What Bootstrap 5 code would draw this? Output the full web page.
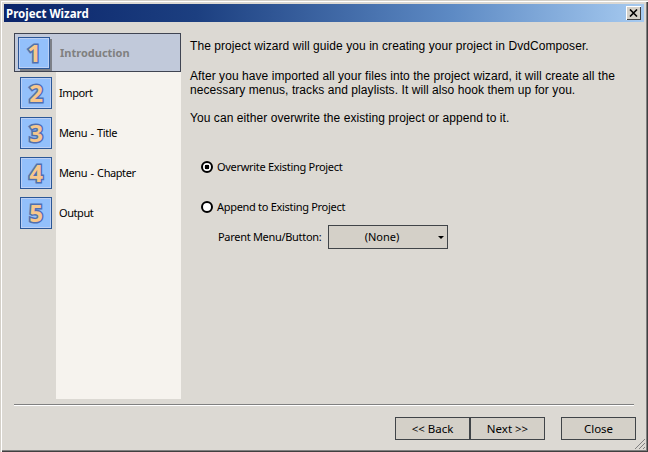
<!DOCTYPE html>
<html lang="en">
<head>
<meta charset="utf-8">
<title>Project Wizard</title>
<link href="https://cdn.jsdelivr.net/npm/bootstrap@5.3.0/dist/css/bootstrap.min.css" rel="stylesheet">
<style>
html,body{margin:0;height:452px;overflow:hidden}
body{font-family:"Noto Sans","DejaVu Sans",sans-serif;font-size:11px;line-height:14px;color:#000;background:#dcd9d3}
.wiz-win{width:648px;height:452px;padding:4px;background:#dcd9d3;box-shadow:inset 1px 1px 0 #d4d0c8,inset 2px 2px 0 #fff,inset -1px -1px 0 #404040,inset -2px -2px 0 #808080}
.wiz-title{height:18px;padding:1px 3px 0 2px;background:linear-gradient(90deg,#0a246a 0%,#1c3f80 30%,#5d8ac4 70%,#a6caf0 100%)}
.wiz-title-text{color:#fff;font-weight:700;font-size:11.5px}
.wiz-x{width:15px;height:14px;margin-top:-1px;background:#d4d0c8;box-shadow:inset 1px 1px 0 #fff,inset -1px -1px 0 #404040}
.wiz-body{height:377px;padding:11px 8px 0 10px}
.wiz-rail{width:167px;height:366px;background:linear-gradient(90deg,transparent 42px,#f6f3ee 42px)}
.wiz-step{height:40px;padding-left:6px;gap:7px;letter-spacing:-.42px;word-spacing:1px}
.wiz-step-on{height:39px;margin-bottom:1px;padding-left:3px;gap:10px;background:#c1c9da;border:1px solid #3f4452;color:#808080;font-weight:700;letter-spacing:0;word-spacing:0}
.wiz-num{width:32px;height:32px;background:#93c0fb;border:1px solid #2b5797;box-shadow:inset 0 0 0 1px #bcd0f5;font-family:"Noto Sans",sans-serif;font-weight:700;font-size:24px;line-height:30px;letter-spacing:0;text-align:center;color:#f7c78c;-webkit-text-stroke:3px #4f6fb0;paint-order:stroke fill}
.wiz-step-on .wiz-num{box-shadow:inset 0 0 0 1px #bcd0f5,2px 2px 0 #7d8087}
.wiz-main{padding:6px 0 0 9px;flex:1}
.wiz-main p{margin:0;font-family:"Liberation Sans",Arial,sans-serif;font-size:12px;letter-spacing:.07px}
.wiz-main p+p{margin-top:14px}
.wiz-main p:first-child+p{margin-top:16px}
.wiz-opts{padding-top:35px;padding-left:11px;letter-spacing:-.3px}
.wiz-radio{height:14px;margin-bottom:26px;gap:4px}
.wiz-radio input{appearance:none;width:12px;height:12px;margin:0;border:2px solid #000;border-radius:50%;background:#fff;flex:none}
.wiz-radio input:checked{background:radial-gradient(circle,#000 0 2.2px,#fff 2.6px)}
.wiz-parent{margin-top:-15px;padding-left:17px;height:24px}
.wiz-parent>span{width:110px}
.wiz-pick{width:120px;height:24px;padding:0 3px 0 0;background:#d4d0c8;border:1px solid #404448;border-radius:0;font-size:11px;line-height:14px;color:#000}
.wiz-pick span{flex:1;text-align:center;margin-right:3px}
.wiz-caret{width:0;height:0;flex:none;border-left:3px solid transparent;border-right:3px solid transparent;border-top:3px solid #000}
.wiz-rule{margin:5px 10px 0;height:2px;width:620px;background:#808080;border-bottom:1px solid #fff}
.wiz-foot{padding:11px 8px 0 0;justify-content:flex-end}
.wiz-b{width:75px;height:23px;padding:0;background:#d4d0c8;border:1px solid #404448;border-radius:0;font-size:11.5px;line-height:14px;color:#000}
.wiz-b:hover{background:#d4d0c8;border-color:#404448;color:#000}
.wiz-gap{margin-left:16px}
.wiz-grip{position:absolute;right:3px;bottom:3px}
</style>
</head>
<body>
<div class="wiz-win position-relative d-flex flex-column">
  <div class="wiz-title d-flex align-items-center justify-content-between">
    <span class="wiz-title-text">Project Wizard</span>
    <span class="wiz-x d-flex align-items-center justify-content-center">
      <svg width="9" height="8" viewBox="0 0 9 8"><path d="M1 0.5 8 7.5M8 0.5 1 7.5" stroke="#000" stroke-width="1.6" fill="none"/></svg>
    </span>
  </div>
  <div class="wiz-body d-flex">
    <div class="wiz-rail d-flex flex-column flex-shrink-0">
      <div class="wiz-step wiz-step-on d-flex align-items-center"><span class="wiz-num">1</span><span>Introduction</span></div>
      <div class="wiz-step d-flex align-items-center"><span class="wiz-num">2</span><span>Import</span></div>
      <div class="wiz-step d-flex align-items-center"><span class="wiz-num">3</span><span>Menu - Title</span></div>
      <div class="wiz-step d-flex align-items-center"><span class="wiz-num">4</span><span>Menu - Chapter</span></div>
      <div class="wiz-step d-flex align-items-center"><span class="wiz-num">5</span><span>Output</span></div>
    </div>
    <div class="wiz-main">
      <p>The project wizard will guide you in creating your project in DvdComposer.</p>
      <p>After you have imported all your files into the project wizard, it will create all the necessary menus, tracks and playlists. It will also hook them up for you.</p>
      <p>You can either overwrite the existing project or append to it.</p>
      <div class="wiz-opts">
        <label class="wiz-radio d-flex align-items-center"><input type="radio" name="m" checked><span>Overwrite Existing Project</span></label>
        <label class="wiz-radio d-flex align-items-center"><input type="radio" name="m"><span>Append to Existing Project</span></label>
        <div class="wiz-parent d-flex align-items-center">
          <span>Parent Menu/Button:</span>
          <button type="button" class="wiz-pick btn d-flex align-items-center"><span>(None)</span><i class="wiz-caret"></i></button>
        </div>
      </div>
    </div>
  </div>
  <div class="wiz-rule"></div>
  <div class="wiz-foot d-flex">
    <button type="button" class="btn wiz-b">&lt;&lt; Back</button>
    <button type="button" class="btn wiz-b">Next &gt;&gt;</button>
    <button type="button" class="btn wiz-b wiz-gap">Close</button>
  </div>
  <svg class="wiz-grip" width="11" height="11" viewBox="0 0 11 11"><path d="M11 1 1 11M11 5 5 11M11 9 9 11" stroke="#808080" fill="none"/></svg>
</div>
</body>
</html>
